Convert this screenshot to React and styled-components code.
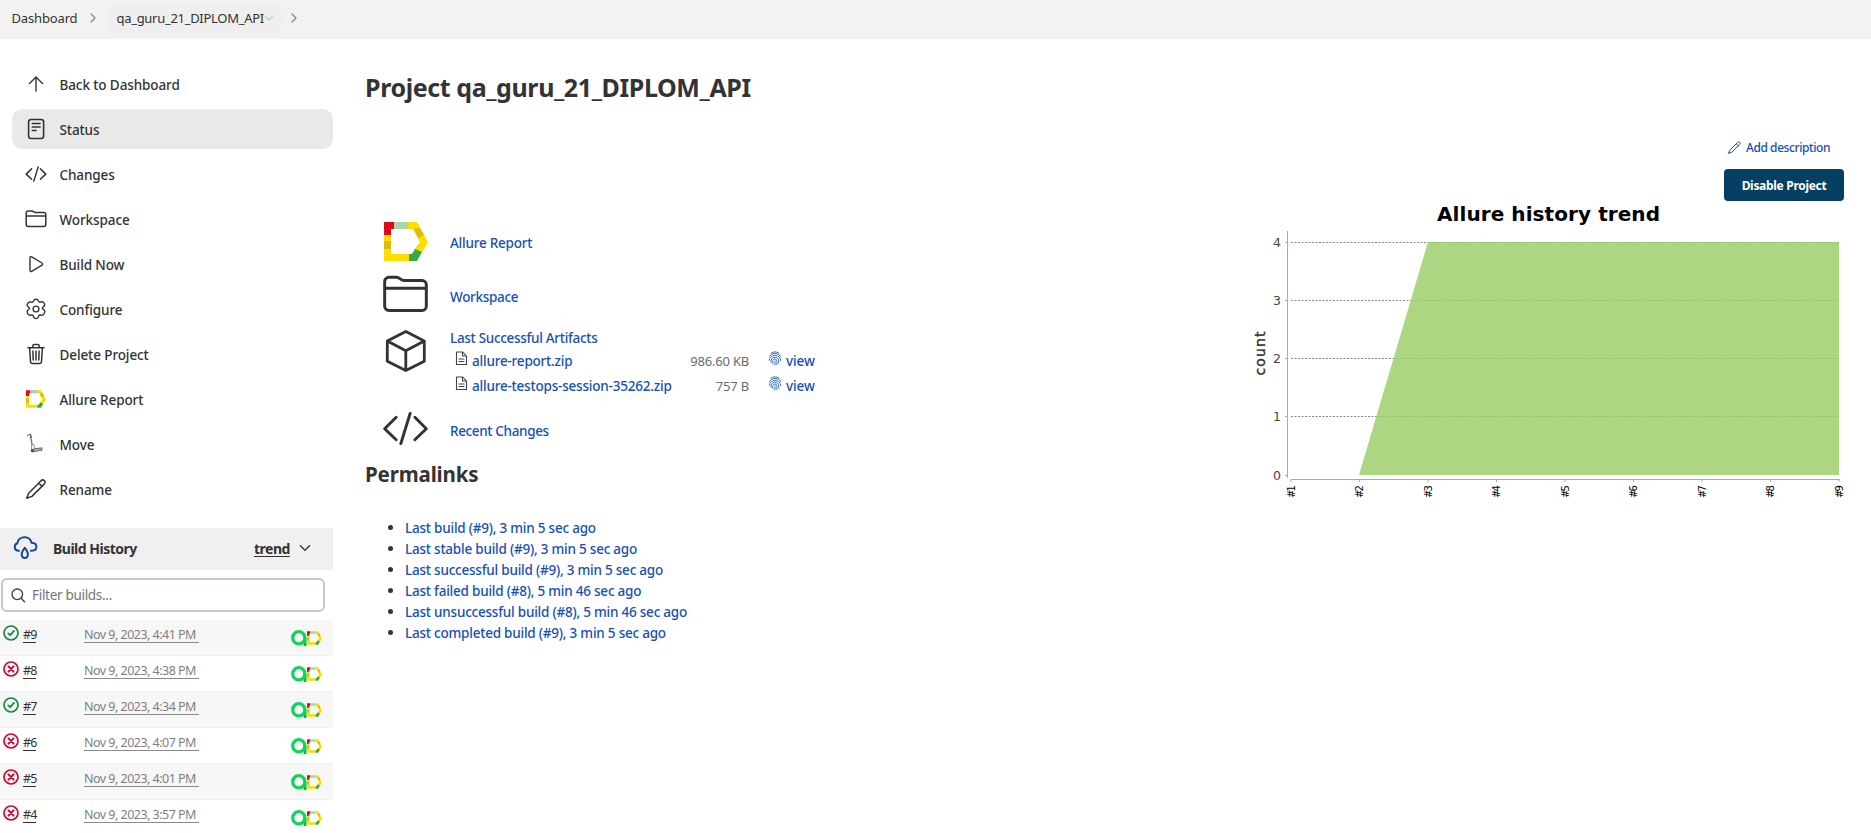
import React from "react";
import styled, { createGlobalStyle, css } from "styled-components";

const Global = createGlobalStyle`
  * { box-sizing: border-box; }
  html, body { margin: 0; height: 833px; overflow: hidden; background: #fff; }
  body { font-family: "Noto Sans", "Open Sans", sans-serif; font-size: 14px; color: #333335; }
  a { color: inherit; text-decoration: none; }
`;

const Page = styled.div`
  height: 833px;
  overflow: hidden;
  display: flex;
  flex-direction: column;
`;
const Breadcrumbs = styled.nav`
  flex: none;
  height: 39px;
  background: #f2f2f2;
  display: flex;
  align-items: center;
  padding: 0 0 3px 11.5px;
  font-size: 13px;
`;
const Crumb = styled.a`
  letter-spacing: ${(p) => p.$ls || 0}px;
  white-space: nowrap;
  color: #333;
`;
const CurrentCrumb = styled.span`
  display: flex;
  align-items: center;
  width: 174px;
  height: 29px;
  padding-left: 8px;
  border-radius: 8px;
  background: #efefef;
`;
const Separator = styled.span`
  display: flex;
  justify-content: center;
  width: ${(p) => p.$w}px;
`;
const Columns = styled.div`
  display: flex;
  flex: 1;
  min-height: 0;
`;
const Sidebar = styled.aside`
  width: 333px;
  flex: none;
  padding-top: 25px;
`;
const Tasks = styled.div`
  display: flex;
  flex-direction: column;
  gap: 5px;
  padding-left: 12px;
  margin-bottom: 19px;
`;
const Task = styled.a`
  display: flex;
  align-items: center;
  gap: 11.5px;
  height: 40px;
  padding: 0 0 0 12px;
  border-radius: 10px;
  font-size: 13.5px;
  font-weight: 500;
  white-space: nowrap;
  letter-spacing: -0.1px;
  background: ${(p) => (p.$active ? "#e9e9e9" : "transparent")};
  svg { flex: none; }
`;
const TaskName = styled.span`
  padding-top: 1px;
`;
const HistoryHeader = styled.div`
  display: flex;
  align-items: center;
  height: 42px;
  background: #f0f0f0;
  padding: 0 0 2px 12px;
  font-size: 14px;
  font-weight: 700;
`;
const HistoryTitle = styled.span`
  width: 201px;
  margin-left: 15px;
  letter-spacing: -0.5px;
`;
const Trend = styled.a`
  width: 45px;
  text-decoration: underline;
  text-underline-offset: 2px;
  letter-spacing: -0.5px;
`;
const Filter = styled.label`
  display: flex;
  align-items: center;
  gap: 6px;
  width: 324px;
  height: 34px;
  margin: 8px 0 8px 1px;
  padding-left: 8px;
  border: 2px solid #c2c8cf;
  border-radius: 6px;
  color: #757575;
  font-size: 13.5px;
  letter-spacing: -0.3px;
`;
const BuildRow = styled.div`
  display: flex;
  height: 36px;
  padding-left: 3px;
  background: ${(p) => (p.$odd ? "#f7f7f7" : "#fff")};
  border-bottom: 1px solid #efefef;
  font-size: 12.5px;
  line-height: 18px;
`;
const Status = styled.span`
  width: 20px;
  padding-top: 5px;
`;
const BuildNumber = styled.a`
  width: 61px;
  padding-top: 6px;
  span { border-bottom: 1px solid #333; display: inline-block; height: 17px; letter-spacing: -0.9px; }
`;
const BuildDate = styled.a`
  width: 207px;
  padding-top: 6px;
  color: #7f7f7f;
  span { border-bottom: 1px solid #8a8a8a; display: inline-block; height: 17px; white-space: pre; letter-spacing: -0.52px; }
`;
const Badges = styled.span`
  padding-top: 10px;
  display: flex;
  align-items: flex-start;
`;

const Main = styled.main`
  flex: 1;
  display: flex;
  justify-content: space-between;
  padding-left: 32px;
`;
const Content = styled.section`
  width: 560px;
  padding-top: 30px;
`;
const Title = styled.h1`
  margin: 0 0 80px;
  height: 36px;
  line-height: 36px;
  font-size: 25px;
  font-weight: 700;
  white-space: nowrap;
  letter-spacing: -0.4px;
`;
const Overview = styled.div`
  display: grid;
  grid-template-columns: 52px 1fr;
  column-gap: 18px;
  grid-template-rows: 57px 47px 84px 86px;
  padding-left: 15px;
`;
const Drawing = styled.div`
  padding: ${(p) => p.$top}px 0 0 ${(p) => p.$left || 0}px;
  svg { display: block; }
`;
const linkType = css`
  color: #1650b4;
  font-size: 13.5px;
  font-weight: 500;
  white-space: nowrap;
  line-height: 20px;
`;
const Link = styled.a`
  ${linkType}
  display: block;
  letter-spacing: ${(p) => p.$ls ?? -0.3}px;
`;
const Cell = styled.div`
  padding-top: ${(p) => p.$top}px;
`;
const Artifact = styled.div`
  display: flex;
  height: 25px;
  align-items: center;
  padding-left: 5px;
`;
const ArtifactName = styled.div`
  display: flex;
  gap: 4px;
  width: 219px;
  svg { flex: none; }
`;
const FileSize = styled.span`
  width: 75px;
  text-align: right;
  font-size: 13px;
  color: #6b6b6b;
  letter-spacing: -0.2px;
`;
const Fingerprint = styled.div`
  display: flex;
  gap: 4px;
  margin-left: 19px;
`;
const Subtitle = styled.h2`
  margin: 0 0 28px;
  height: 30px;
  line-height: 30px;
  font-size: 20.5px;
  letter-spacing: -0.15px;
`;
const Permalinks = styled.ul`
  margin: 0;
  padding-left: 40px;
  li { height: 21px; line-height: 21px; }
  li::marker { color: #333; }
  a { ${linkType} line-height: 21px; letter-spacing: -0.22px; }
`;
const Side = styled.section`
  width: 620px;
  padding: 98px 27px 0 0;
  display: flex;
  flex-direction: column;
  align-items: flex-end;
`;
const Describe = styled.a`
  display: flex;
  align-items: center;
  gap: 4px;
  height: 20px;
  margin: 0 14px 12px 0;
  color: #1650b4;
  font-size: 12px;
  font-weight: 500;
  letter-spacing: -0.42px;
`;
const Disable = styled.button`
  width: 120px;
  height: 32px;
  padding: 0;
  border: 0;
  border-radius: 4px;
  background: #053f61;
  color: #fff;
  font: 700 12px "Noto Sans", sans-serif;
  letter-spacing: -0.3px;
`;
const ChartBox = styled.div`
  width: 620px;
  height: 300px;
  margin-right: -27px;
`;

const Svg = ({ s = 24, w = s, h = s, vb = "0 0 24 24", sw = 1.4, children, ...rest }) => (
  <svg width={w} height={h} viewBox={vb} fill="none" stroke="currentColor" strokeWidth={sw} strokeLinecap="round" strokeLinejoin="round" {...rest}>
    {children}
  </svg>
);
const ArrowUp = () => <Svg><path d="M12 19V5.500M5.500 11.500 12 5l6.500 6.500" /></Svg>;
const Doc = () => (
  <Svg sw={1.6}><rect x="4.600" y="2.500" width="15" height="19" rx="2.500" /><path d="M8.300 6.500h7.800M8.300 10h7.800M8.300 13.500h3.800" /></Svg>
);
const Code = ({ s = 24, sw = 1.5 }) => (
  <Svg s={s} sw={sw}><path d="M7.600 6.700 2.200 12.100l5.400 5.200M16.400 6.700l5.400 5.400-5.400 5.200M14.200 4.900 9.800 19.100" /></Svg>
);
const Folder = ({ s = 24, sw = 1.5 }) => (
  <Svg s={s} sw={sw}><path d="M2.200 17.500V5.900a2 2 0 0 1 2-2h3.500c1.700 0 1.900 1.500 3.600 1.500h8.500a2 2 0 0 1 2 2v10.100a2 2 0 0 1-2 2H4.200a2 2 0 0 1-2-2zM2.200 9.100h19.600" /></Svg>
);
const Play = () => <Svg><path d="M6 5.700v12.600c0 1 .900 1.500 1.700 1l10.300-6.200c.8-.5.8-1.600 0-2.100L7.700 4.800C6.900 4.300 6 4.800 6 5.700z" /></Svg>;
const Gear = () => (
  <Svg>
    <circle cx="12" cy="12" r="2.900" />
    <path d="M9.500 4.100C10 2.700 10.900 2.300 12 2.300s2 .4 2.500 1.800c.4.900 1.200 1.200 2.100.9 1.700-.5 2.900 0 3.700 1.500.7 1.300.6 2.300-.7 3.200-1.200.8-1.600 1.500-.8 2.300.8.800 1.900 1 2 2.100.1 1.100-.3 2-1 3.100-.7 1-1.500 1.400-2.800 1-1.100-.3-1.900-.1-2.300.9-.5 1.700-1.300 2.500-2.700 2.500s-2.300-.8-2.700-2.400c-.3-1-1.100-1.400-2.300-1-1.200.3-2.200 0-2.900-1-.7-1.100-1.100-2-.9-3 .2-1 1.100-1.300 1.800-2 .8-.8.400-1.600-.8-2.500C2.500 8.800 2.900 7.800 3.600 6.600c.7-1.300 1.800-2 3.600-1.500 1.100.3 1.900 0 2.300-1z" />
  </Svg>
);
const Trash = () => (
  <Svg sw={1.5}><path d="M4 5.700h16M5.600 6l.9 13.500a2 2 0 0 0 2 1.900h7a2 2 0 0 0 2-1.900L18.400 6M8.800 5.500V4.100c0-.9.600-1.500 1.500-1.500h3.400c.9 0 1.500.6 1.500 1.500v1.400M12 9v9M8.900 9l.3 9M15.100 9l-.3 9" /></Svg>
);
const Pencil = ({ s = 24, sw = 1.5 }) => (
  <Svg s={s} sw={sw}><path d="M4.700 16.300 16.800 3.900c1.200-1.200 2.500-1.200 3.500-.3 1.100 1 1 2.300-.1 3.500L7.900 19.400 2.700 21.300zM14.700 6l3.500 3.400" /></Svg>
);
const Allure = ({ w = 20, h = 18, fit }) => (
  <svg width={w} height={h} viewBox="0 0 44 39" preserveAspectRatio={fit}>
    <path fill="#fd0" d="M0 12h7v20h18v7H0z" />
    <path fill="#d9bd12" d="M0 19h7v8H0z" />
    <path fill="#e10716" d="M0 0h10v7H7v6H0z" />
    <path fill="#a5d6a3" d="M10 0h15v7H10z" />
    <path fill="#fd0" d="M24 0h9l11 20-6 11-8-3 6-8-7-13h-5z" />
    <path fill="#d9bd12" d="m30 7 6-1 4 7-6 3z" />
    <path fill="#36a946" d="M25 32h3l3-5 7 3-5 9h-8z" />
  </svg>
);
const MoveIcon = () => (
  <svg width="24" height="24" viewBox="0 0 24 24" fill="none">
    <path d="M6.300 3.500 8 11l.3 7" stroke="#bbb" strokeWidth="1.500" />
    <path d="m6.300 3.500 1.700 9" stroke="#555" strokeWidth=".8" />
    <path d="M3.300 4.300C4.500 2.300 6.500 1.900 7 3.500l.300 2.500" stroke="#a44" strokeWidth="1.100" />
    <path d="M7.500 12.500h2.500l1 5H7.500z" fill="#eee" stroke="#777" strokeWidth=".7" />
    <path d="m10.500 16.800 7.500-1v2.400L8 20l-1-1.500z" fill="#aaa" stroke="#555" strokeWidth=".8" />
    <circle cx="8.300" cy="18.700" r="1.400" fill="#444" />
  </svg>
);
const Chevron = ({ d = "m1.500 .8 4.500 4.500L10.500 .8", w = 12, h = 6, c = "#444", sw = 1.6 }) => (
  <Svg w={w} h={h} vb={`0 0 ${w} ${h}`} sw={sw} stroke={c}><path d={d} /></Svg>
);
const Cloud = () => (
  <Svg w={26} h={24} vb="0 0 26 24" sw={2} stroke="#12499f">
    <path d="M7 14.800H6a3.900 3.900 0 0 1-.7-7.500c.4-3.800 3.600-6.100 7.300-6.100 3.700 0 6.400 2.400 6.900 5.600 2.800.1 4.900 1.700 4.900 4 0 2.400-1.900 3.900-4.500 4h-1" />
    <path d="M12.800 11.800c2 2.600 3.100 4.300 3.100 6.300 0 2.400-1.200 4-3.100 4s-3.100-1.600-3.100-4c0-2 1.100-3.700 3.100-6.300z" />
  </Svg>
);
const Search = () => <Svg w={15} h={15} vb="0 0 15 15" sw={1.4} stroke="#444"><circle cx="6.300" cy="6.300" r="5.300" /><path d="m10.200 10.300 3.300 3.500" /></Svg>;
const BuildState = ({ ok }) => (
  <Svg w={16} h={16} vb="0 0 16 16" sw={1.7} stroke={ok ? "#1b8a41" : "#cc0a2f"}>
    <circle cx="8" cy="8" r="7" />
    <path d={ok ? "m5.300 8.500 1.900 1.700 3.700-4.300" : "m5.400 5.400 5.200 5.200M10.600 5.400l-5.200 5.200"} strokeWidth={ok ? 1.8 : 2} />
  </Svg>
);
const TestOps = () => (
  <svg width="16" height="16" viewBox="0 0 16 16" fill="none">
    <path d="M14 8v8" stroke="#10b945" strokeWidth="3" />
    <circle cx="7.800" cy="7.800" r="6.100" stroke="#0fd65a" strokeWidth="3.300" />
  </svg>
);
const Cube = () => (
  <Svg w={51} h={46} vb="0 0 51 46" sw={2.8}><path d="M25.800 2.400 44.300 12v20.200L25.800 41.600 7.300 32.200V12zM7.800 12.200l18 9.500 18-9.500M25.800 21.700v19.900" /></Svg>
);
const FileIcon = () => (
  <Svg w={13} h={15} vb="0 0 13 15" sw={1.1} stroke="#444"><path d="M1.500 1h6.300L11.500 5v8.500h-10zM7.500 1v4h4M4 8h5M4 10.500h5" /></Svg>
);
const FingerIcon = () => (
  <Svg w={14} h={15} vb="0 0 14 15" sw={0.9} stroke="#2861bd">
    <path d="M3 2.200Q7-.7 11 2.200M1.200 5.300Q3 2.500 7 2.400t5.800 2.900M1.300 9.200C1.500 6.500 3.500 4.300 7 4.300s5.700 2.200 5.700 5.400M3 11.500c-.5-3 1-5.300 4-5.300s4.200 2.500 3.700 6M5 13c-.8-2.500-.3-5 2-5s2.200 3 1.700 5.500M7 10v4" />
  </Svg>
);

const ticks = [4, 3, 2, 1, 0];
const builds = [1, 2, 3, 4, 5, 6, 7, 8, 9];
/* Plot origin is (40, 274); one build is 68.5 wide, one count 58.2 high. */
const TrendChart = () => (
  <svg width="620" height="300" viewBox="0 0 620 300" fontFamily="DejaVu Sans">
    <text x="297.500" y="20" textAnchor="middle" fontSize="20" fontWeight="700" fill="#000" textLength="223">Allure history trend</text>
    <text transform="translate(14 152.500) rotate(-90)" textAnchor="middle" fontSize="14" stroke="#333" strokeWidth=".4" fill="#333" textLength="44">count</text>
    {ticks.map((t) => {
      const y = Math.floor(274 - t * 58.2) + 0.5;
      return (
        <g key={t}>
          <path d={`M34 ${y}h3`} stroke="#aaa" />
          {t > 0 && <path d={`M40 ${y}H588`} stroke="#888" strokeDasharray="2 1.500" />}
          <text x="30" y={y + 4.5} textAnchor="end" fontSize="12.500" fill="#444">{t}</text>
        </g>
      );
    })}
    <path d="M36.500 30v247" stroke="#aaa" />
    <path d="M108 274 177 41H588v233z" fill="#9acd65" fillOpacity=".82" />
    <path d="M40 278.500H588.500" stroke="#aaa" />
    {builds.map((b) => (
      <g key={b}>
        <path d={`M${40 + (b - 1) * 68.5} 278v3`} stroke="#aaa" />
        <text transform={`translate(${43.5 + (b - 1) * 68.5} 297) rotate(-90)`} fontSize="10" fill="#000" textLength="13">#{b}</text>
      </g>
    ))}
  </svg>
);

const tasks = [
  ["Back to Dashboard", <ArrowUp />], ["Status", <Doc />], ["Changes", <Code />], ["Workspace", <Folder />],
  ["Build Now", <Play />], ["Configure", <Gear />], ["Delete Project", <Trash />],
  ["Allure Report", <Svg><g stroke="none" transform="translate(2 3)"><Allure /></g></Svg>], ["Move", <MoveIcon />], ["Rename", <Pencil />],
];
const history = [
  [9, "4:41 PM", true], [8, "4:38 PM", false], [7, "4:34 PM", true], [6, "4:07 PM", false], [5, "4:01 PM", false], [4, "3:57 PM", false],
];
const artifacts = [["allure-report.zip", "986.60 KB"], ["allure-testops-session-35262.zip", "757 B"]];
const permalinks = [
  "Last build (#9), 3 min 5 sec ago", "Last stable build (#9), 3 min 5 sec ago", "Last successful build (#9), 3 min 5 sec ago",
  "Last failed build (#8), 5 min 46 sec ago", "Last unsuccessful build (#8), 5 min 46 sec ago", "Last completed build (#9), 3 min 5 sec ago",
];

export default function App() {
  return (
    <Page>
      <Global />
      <Breadcrumbs>
        <Crumb $ls={-0.15}>Dashboard</Crumb>
        <Separator $w={31}><Chevron w={6} h={10} d="m1 1 4 4-4 4" c="#888" sw={1.3} /></Separator>
        <CurrentCrumb><Crumb $ls={-0.29}>qa_guru_21_DIPLOM_API</Crumb><Chevron w={10} h={6} d="m1 1 4 4 4-4" c="#ccc" sw={1.2} /></CurrentCrumb>
        <Separator $w={24}><Chevron w={6} h={10} d="m1 1 4 4-4 4" c="#888" sw={1.3} /></Separator>
      </Breadcrumbs>
      <Columns>
        <Sidebar>
          <Tasks>
            {tasks.map(([name, icon]) => <Task key={name} $active={name === "Status"}>{icon}<TaskName>{name}</TaskName></Task>)}
          </Tasks>
          <HistoryHeader>
            <Cloud /><HistoryTitle>Build History</HistoryTitle><Trend>trend</Trend><Chevron />
          </HistoryHeader>
          <Filter><Search />Filter builds...</Filter>
          {history.map(([n, time, ok]) => (
            <BuildRow key={n} $odd={n % 2 === 1}>
              <Status><BuildState ok={ok} /></Status>
              <BuildNumber><span>#{n}</span></BuildNumber>
              <BuildDate><span>{`Nov 9, 2023, ${time} `}</span></BuildDate>
              <Badges><TestOps /><Allure w={15} h={16} fit="xMidYMid" /></Badges>
            </BuildRow>
          ))}
        </Sidebar>
        <Main>
          <Content>
            <Title>Project qa_guru_21_DIPLOM_API</Title>
            <Overview>
              <Drawing $top={37} $left={4}><Allure w={44} h={39} /></Drawing>
              <Cell $top={48}><Link $ls={-0.22}>Allure Report</Link></Cell>
              <Drawing $top={27}><Folder s={51} sw={1.4} /></Drawing>
              <Cell $top={45}><Link>Workspace</Link></Cell>
              <Drawing $top={40}><Cube /></Drawing>
              <Cell $top={39}>
                <Link>Last Successful Artifacts</Link>
                {artifacts.map(([name, size]) => (
                  <Artifact key={name}>
                    <ArtifactName><FileIcon /><Link $ls={-0.2}>{name}</Link></ArtifactName>
                    <FileSize>{size}</FileSize>
                    <Fingerprint><FingerIcon /><Link $ls={-0.1}>view</Link></Fingerprint>
                  </Artifact>
                ))}
              </Cell>
              <Drawing $top={30}><Code s={51} sw={1.4} /></Drawing>
              <Cell $top={48}><Link $ls={-0.35}>Recent Changes</Link></Cell>
            </Overview>
            <Subtitle>Permalinks</Subtitle>
            <Permalinks>{permalinks.map((t) => <li key={t}><a>{t}</a></li>)}</Permalinks>
          </Content>
          <Side>
            <Describe><Pencil s={15} sw={1.6} />Add description</Describe>
            <Disable>Disable Project</Disable>
            <ChartBox><TrendChart /></ChartBox>
          </Side>
        </Main>
      </Columns>
    </Page>
  );
}
